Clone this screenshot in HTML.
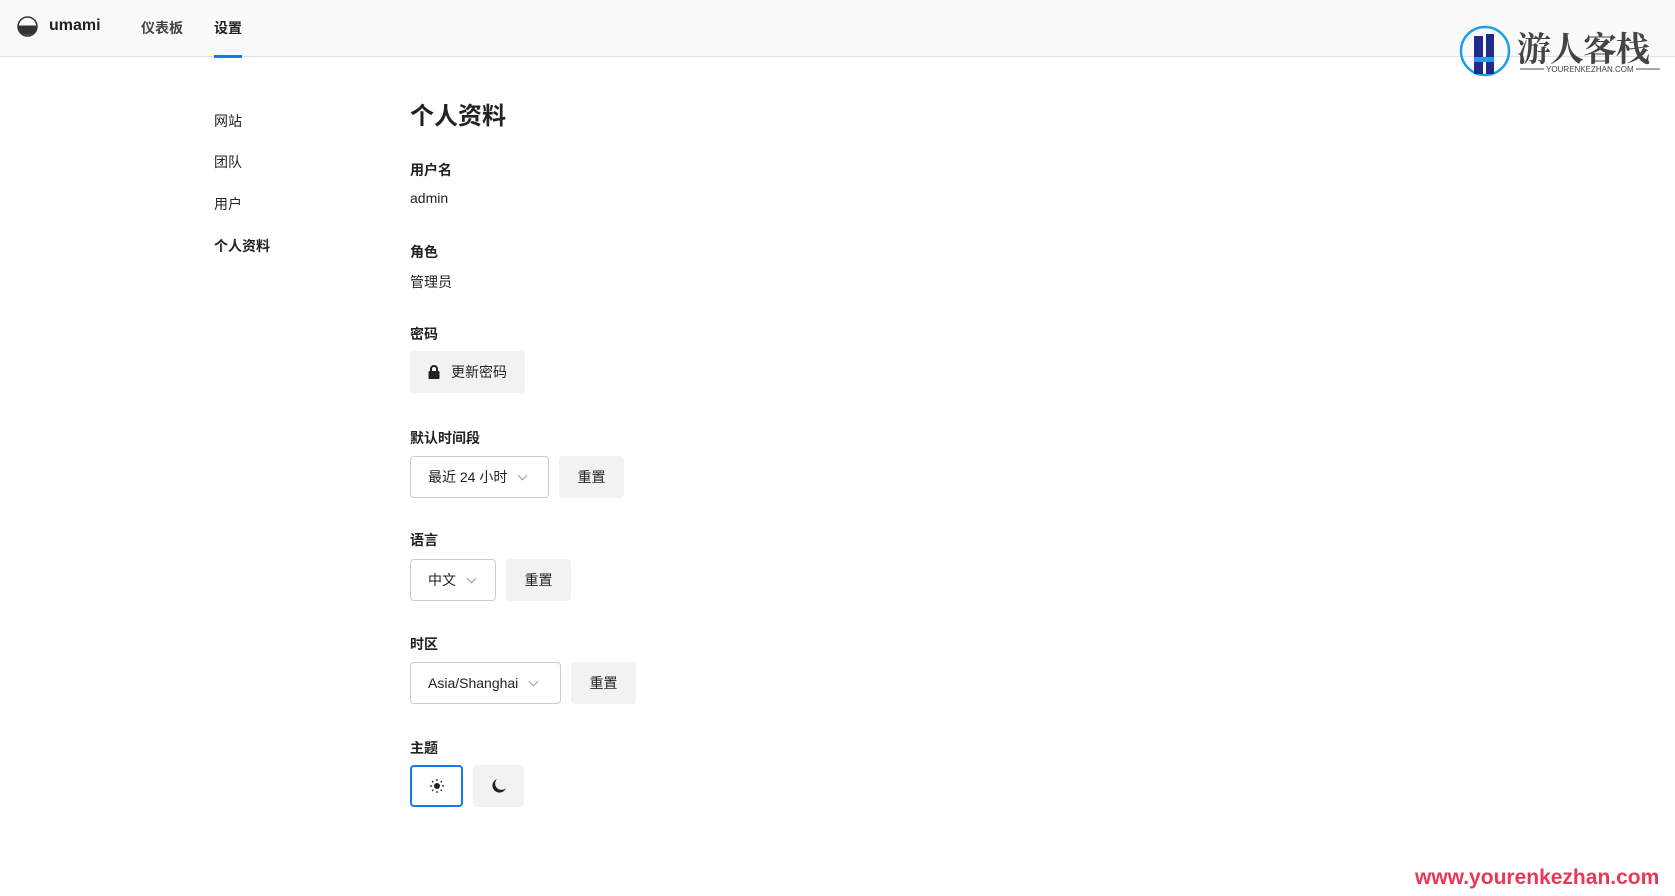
<!DOCTYPE html>
<html><head><meta charset="utf-8"><style>
*{margin:0;padding:0;box-sizing:border-box}
body{width:1675px;height:896px;background:#fff;font-family:"Liberation Sans","Noto Sans CJK SC",sans-serif;color:#222;position:relative;overflow:hidden;font-size:14px}
.hdr{position:absolute;left:0;top:0;width:1675px;height:57px;background:#fafafa;border-bottom:1px solid #e1e1e1}
.a{position:absolute;white-space:nowrap}
.b{font-weight:bold}
.btn{position:absolute;background:#f2f2f2;border-radius:4px;display:flex;align-items:center;justify-content:center;font-size:14px}
.sel{position:absolute;border:1px solid #ccc;border-radius:4px;background:#fff;display:flex;align-items:center;padding-left:17px;font-size:14px}
.chev{margin-left:12px;width:7px;height:7px;border-right:1px solid #999;border-bottom:1px solid #999;transform:rotate(45deg);margin-top:-4px}
</style></head><body>
<div class="hdr"></div>
<svg class="a" style="left:17px;top:16px" width="21" height="21" viewBox="0 0 21 21"><circle cx="10.5" cy="10.5" r="9.5" fill="none" stroke="#333" stroke-width="1.5"/><path d="M1 9.5 H20 A9.5 9.5 0 0 1 1 9.5Z" fill="#333"/></svg>
<div class="a b" style="left:49px;top:17px;font-size:16px">umami</div>
<div class="a b" style="left:141px;top:18px;color:#444">仪表板</div>
<div class="a b" style="left:214px;top:18px">设置</div>
<div class="a" style="left:214px;top:55px;width:28px;height:3px;background:#147af3"></div>

<div class="a" style="left:214px;top:111px">网站</div>
<div class="a" style="left:214px;top:152px">团队</div>
<div class="a" style="left:214px;top:194px">用户</div>
<div class="a b" style="left:214px;top:236px">个人资料</div>

<div class="a b" style="left:410px;top:96px;font-size:24px">个人资料</div>
<div class="a b" style="left:410px;top:160px">用户名</div>
<div class="a" style="left:410px;top:190px">admin</div>
<div class="a b" style="left:410px;top:242px">角色</div>
<div class="a" style="left:410px;top:272px">管理员</div>
<div class="a b" style="left:410px;top:324px">密码</div>
<div class="btn" style="left:410px;top:351px;width:115px;height:42px"><svg width="12" height="14" viewBox="0 0 12 14" style="margin-right:11px"><path d="M3 6V4a3 3 0 0 1 6 0v2" fill="none" stroke="#222" stroke-width="2"/><rect x="0.5" y="6" width="11" height="8" rx="1" fill="#222"/></svg>更新密码</div>
<div class="a b" style="left:410px;top:428px">默认时间段</div>
<div class="sel" style="left:410px;top:456px;width:139px;height:42px">最近 24 小时<span class="chev"></span></div>
<div class="btn" style="left:559px;top:456px;width:65px;height:42px">重置</div>
<div class="a b" style="left:410px;top:530px">语言</div>
<div class="sel" style="left:410px;top:559px;width:86px;height:42px">中文<span class="chev"></span></div>
<div class="btn" style="left:506px;top:559px;width:65px;height:42px">重置</div>
<div class="a b" style="left:410px;top:634px">时区</div>
<div class="sel" style="left:410px;top:662px;width:151px;height:42px">Asia/Shanghai<span class="chev"></span></div>
<div class="btn" style="left:571px;top:662px;width:65px;height:42px">重置</div>
<div class="a b" style="left:410px;top:738px">主题</div>
<div class="btn" style="left:410px;top:765px;width:53px;height:42px;background:#fff;border:2px solid #147af3"><svg width="14" height="14" viewBox="0 0 14 14"><circle cx="7" cy="7" r="3" fill="#222"/><g stroke="#222" stroke-width="1.2"><path d="M7 0v2M7 12v2M0 7h2M12 7h2M2 2l1.4 1.4M10.6 10.6L12 12M2 12l1.4-1.4M10.6 3.4L12 2"/></g></svg></div>
<div class="btn" style="left:473px;top:765px;width:51px;height:42px"><svg width="16" height="16" viewBox="0 0 16 16"><path d="M6 1a7 7 0 1 0 9 9A6 6 0 0 1 6 1z" fill="#222"/></svg></div>

<svg class="a" style="left:1458px;top:24px" width="54" height="54" viewBox="0 0 54 54"><circle cx="27" cy="27" r="24" fill="none" stroke="#1aa0e8" stroke-width="2.5"/><path d="M16 12h9v38h-9z" fill="#1f2a8a"/><path d="M28 10h8v40h-8z" fill="#1f2a8a"/><path d="M16 33h20v5H16z" fill="#1aa0e8"/></svg>
<div class="a b" style="left:1517px;top:22px;font-size:34px;font-family:'Noto Serif CJK SC',serif;color:#444;letter-spacing:-1px">游人客栈</div>
<div class="a" style="left:1520px;top:64px;font-size:8px;color:#444">━━━ YOURENKEZHAN.COM ━━━</div>
<div class="a b" style="left:1415px;top:866px;font-size:21px;color:#e8385a;font-family:'Liberation Sans',sans-serif">www.yourenkezhan.com</div>
</body></html>
